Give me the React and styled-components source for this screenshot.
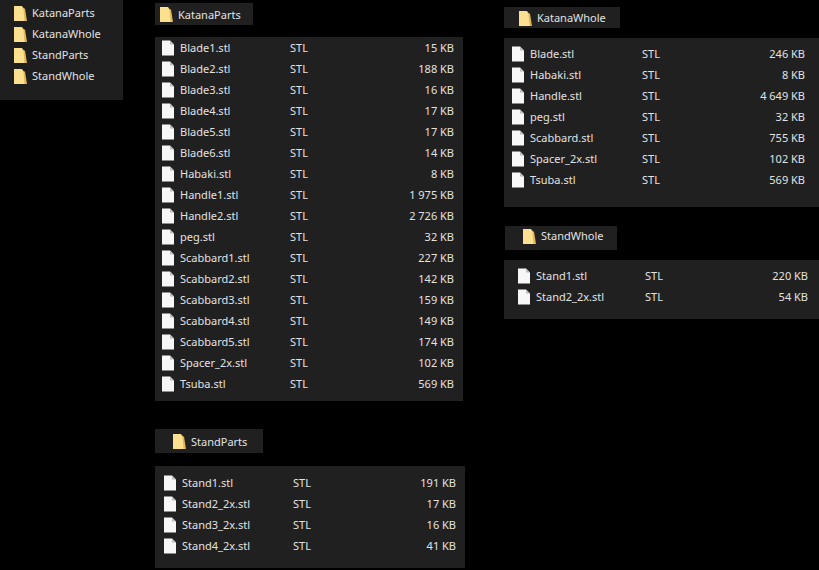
import React from 'react';
import styled, { createGlobalStyle } from 'styled-components';

const Global = createGlobalStyle`
    html, body { margin: 0; padding: 0; background: #000; }
    body { font-family: "Noto Sans", "Open Sans", sans-serif; font-size: 11px; color: #e2e2e2; }
`;

const Page = styled.div`
    display: flex;
    align-items: flex-start;
    width: 819px;
    height: 570px;
    overflow: hidden;
    background: #000;
`;

const Sidebar = styled.div`
    flex: none;
    width: 123px;
    height: 100px;
    box-sizing: border-box;
    padding: 2px 0 0 14px;
    background: #1e1e1e;
`;

const SideRow = styled.div`
    display: flex;
    align-items: center;
    gap: 5px;
    height: 21px;
`;

const Column = styled.div`
    flex: none;
    display: flex;
    flex-direction: column;
    margin-left: ${p => p.$left}px;
    width: ${p => p.$width}px;
    padding-top: ${p => p.$top}px;
`;

const Header = styled.div`
    display: flex;
    align-items: center;
    gap: 5px;
    box-sizing: border-box;
    width: ${p => p.$width}px;
    height: ${p => p.$height}px;
    margin-left: ${p => p.$left || 0}px;
    padding-left: ${p => p.$pad}px;
    padding-bottom: ${p => p.$lift || 0}px;
    background: #202020;
`;

const Panel = styled.div`
    box-sizing: border-box;
    width: ${p => p.$width ? `${p.$width}px` : 'auto'};
    height: ${p => p.$height}px;
    margin-top: ${p => p.$gap}px;
    margin-bottom: ${p => p.$after || 0}px;
    padding: ${p => p.$top}px ${p => p.$right}px 0 ${p => p.$pad}px;
    background: #202020;
`;

const Row = styled.div`
    display: grid;
    grid-template-columns: 12px ${p => p.$name}px 1fr auto;
    column-gap: 6px;
    align-items: center;
    height: 21px;
`;

const Size = styled.span`
    text-align: right;
`;

const FolderIcon = () => (
    <svg width="13" height="16" viewBox="0 0 13 16">
        <path d="M0 1 L8 1 L10 3.5 L11 3.5 L13 16 L0 16 Z" fill="#e3b655" />
        <path d="M0 1 L7.5 1 L9.5 4 L10.5 16 L0 16 Z" fill="#fbe08f" />
    </svg>
);

const FileIcon = () => (
    <svg width="12" height="16" viewBox="0 0 12 16">
        <path d="M0 0.5 L8 0.5 L12 4.5 L12 15.5 L0 15.5 Z" fill="#f7f7f7" />
        <path d="M8 0.5 L8 4.5 L12 4.5 Z" fill="#bdbdbd" />
    </svg>
);

const Files = ({ items, name }) => items.map(([file, size]) => (
    <Row key={file} $name={name}>
        <FileIcon />
        <span>{file}</span>
        <span>STL</span>
        <Size>{size}</Size>
    </Row>
));

const katanaParts = [
    ['Blade1.stl', '15 KB'], ['Blade2.stl', '188 KB'], ['Blade3.stl', '16 KB'],
    ['Blade4.stl', '17 KB'], ['Blade5.stl', '17 KB'], ['Blade6.stl', '14 KB'],
    ['Habaki.stl', '8 KB'], ['Handle1.stl', '1 975 KB'], ['Handle2.stl', '2 726 KB'],
    ['peg.stl', '32 KB'], ['Scabbard1.stl', '227 KB'], ['Scabbard2.stl', '142 KB'],
    ['Scabbard3.stl', '159 KB'], ['Scabbard4.stl', '149 KB'], ['Scabbard5.stl', '174 KB'],
    ['Spacer_2x.stl', '102 KB'], ['Tsuba.stl', '569 KB'],
];
const standParts = [
    ['Stand1.stl', '191 KB'], ['Stand2_2x.stl', '17 KB'],
    ['Stand3_2x.stl', '16 KB'], ['Stand4_2x.stl', '41 KB'],
];
const katanaWhole = [
    ['Blade.stl', '246 KB'], ['Habaki.stl', '8 KB'], ['Handle.stl', '4 649 KB'],
    ['peg.stl', '32 KB'], ['Scabbard.stl', '755 KB'], ['Spacer_2x.stl', '102 KB'],
    ['Tsuba.stl', '569 KB'],
];
const standWhole = [['Stand1.stl', '220 KB'], ['Stand2_2x.stl', '54 KB']];

export default function App() {
    return (
        <Page>
            <Global />
            <Sidebar>
                {['KatanaParts', 'KatanaWhole', 'StandParts', 'StandWhole'].map(n => (
                    <SideRow key={n}><FolderIcon />{n}</SideRow>
                ))}
            </Sidebar>

            <Column $left={32} $width={310} $top={3}>
                <Header $width={98} $height={22} $pad={5}><FolderIcon />KatanaParts</Header>
                <Panel $width={308} $height={364} $gap={12} $top={0} $pad={7} $right={9} $after={28}>
                    <Files items={katanaParts} name={104} />
                </Panel>
                <Header $width={108} $height={24} $pad={18}><FolderIcon />StandParts</Header>
                <Panel $height={102} $gap={13} $top={6} $pad={9} $right={9}>
                    <Files items={standParts} name={105} />
                </Panel>
            </Column>

            <Column $left={39} $width={315} $top={7}>
                <Header $width={116} $height={21} $pad={15}><FolderIcon />KatanaWhole</Header>
                <Panel $height={169} $gap={10} $top={5} $pad={8} $right={14} $after={19}>
                    <Files items={katanaWhole} name={106} />
                </Panel>
                <Header $width={112} $height={24} $left={1} $pad={18} $lift={5}><FolderIcon />StandWhole</Header>
                <Panel $height={59} $gap={10} $top={5} $pad={14} $right={11}>
                    <Files items={standWhole} name={103} />
                </Panel>
            </Column>
        </Page>
    );
}
